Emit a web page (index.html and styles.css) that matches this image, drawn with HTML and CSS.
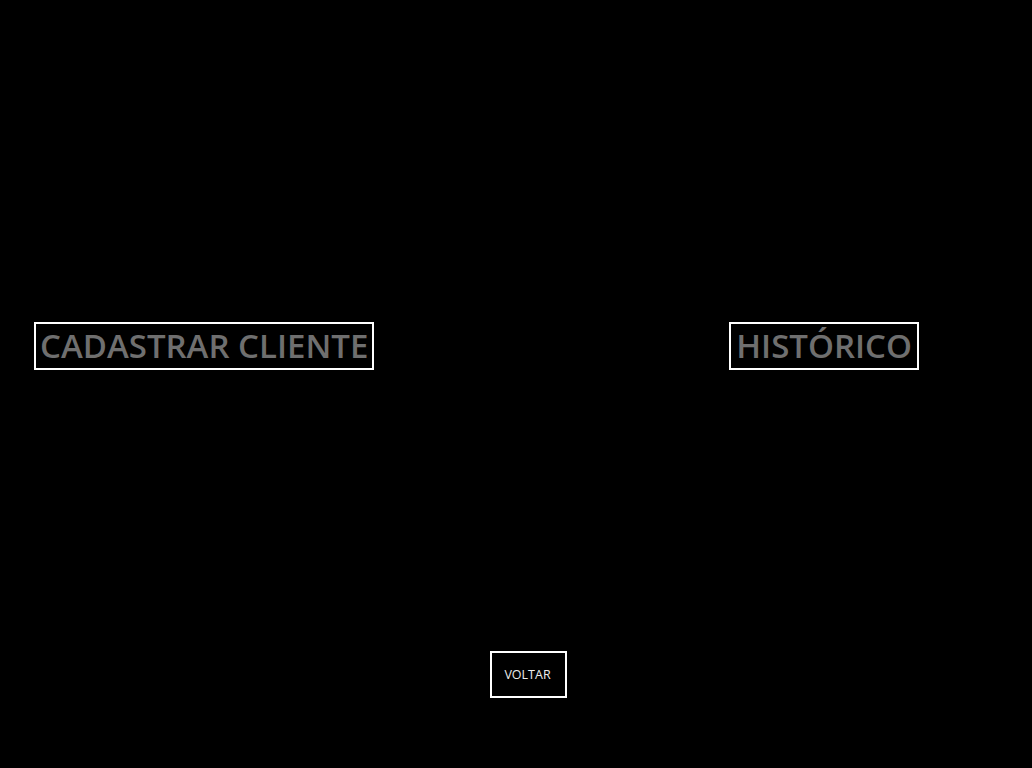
FILE: index.html
```html
<!DOCTYPE html>
<html lang="pt">
<head>
  <meta charset="UTF-8" />
  <title>Menu</title>
  <link rel="stylesheet" href="styles.css">
</head>
<body>

<div class="menu">
  <div class="options">
    <a class="option" href="#">CADASTRAR CLIENTE</a>
    <a class="option option-small" href="#">HISTÓRICO</a>
  </div>
  <div class="back">
    <button class="back-btn">VOLTAR</button>
  </div>
</div>

</body>
</html>
```

FILE: styles.css
```css
* {
  box-sizing: border-box;
  margin: 0;
  padding: 0;
}

body {
  font-family: "Open Sans", Arial, sans-serif;
  background: #000;
  height: 100vh;
}

.menu {
  padding-top: 322px;
}

.options {
  display: flex;
  gap: 355px;
  padding-left: 34px;
}

.option {
  display: block;
  border: 2px solid #fff;
  color: #6f6f6f;
  font-size: 33px;
  font-weight: 600;
  line-height: 44px;
  padding: 0 4px;
  text-decoration: none;
}

.option-small {
  padding: 0 5px 0 5px;
}

.back {
  display: flex;
  padding-top: 281px;
  padding-left: 490px;
}

.back-btn {
  font-family: "Open Sans", Arial, sans-serif;
  font-size: 12.5px;
  color: #ececec;
  background: #000;
  border: 2px solid #fff;
  width: 77px;
  height: 47px;
  padding-right: 2px;
  cursor: pointer;
}
```
